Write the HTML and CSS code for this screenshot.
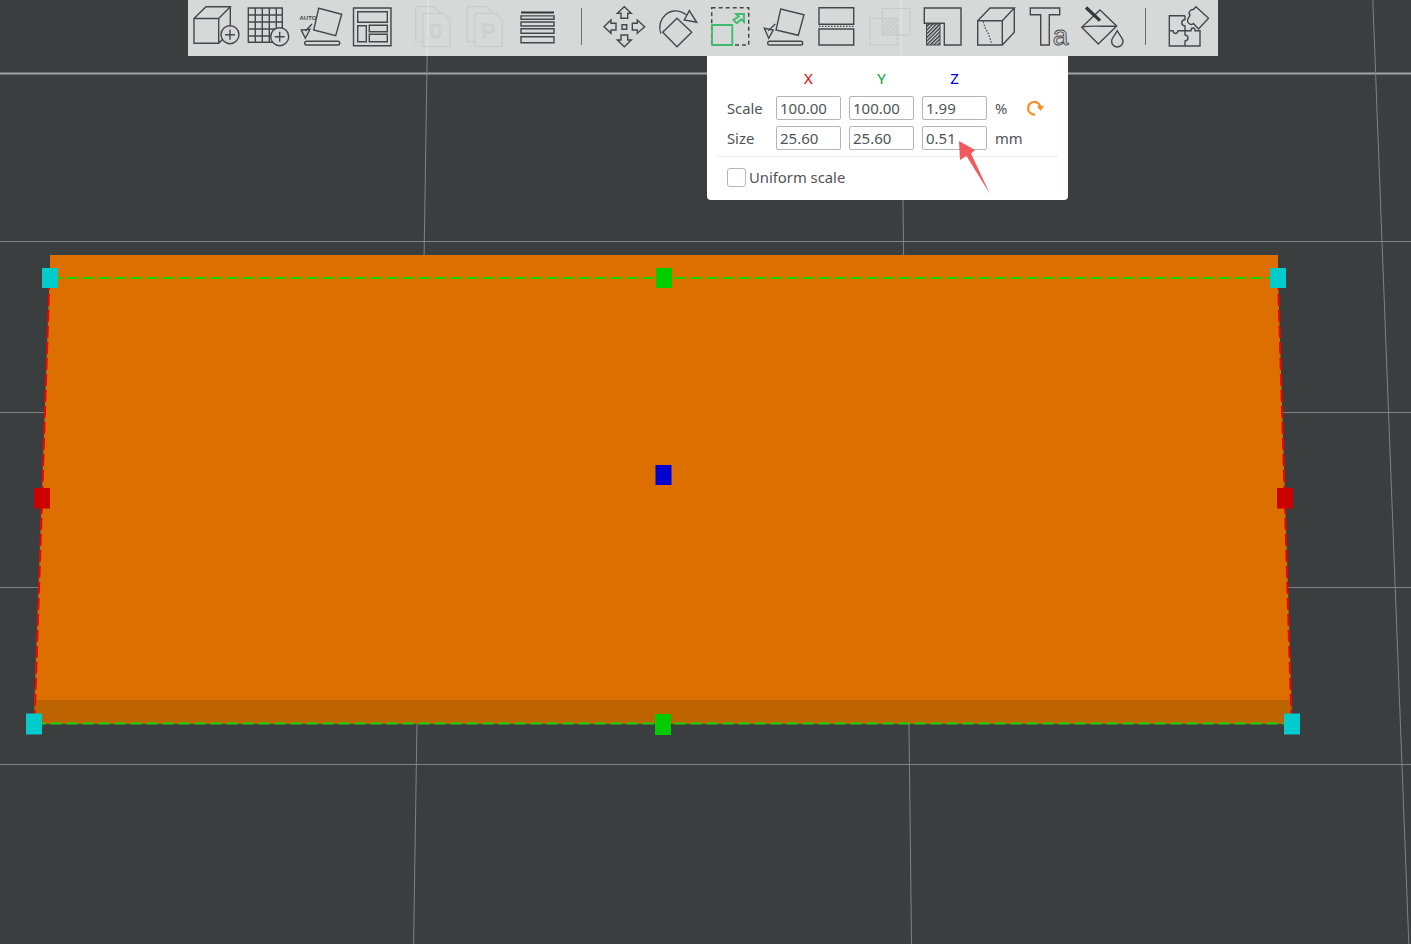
FILE: index.html
```html
<!DOCTYPE html>
<html lang="en">
<head>
<meta charset="utf-8">
<title>Scale tool</title>
<link rel="stylesheet" href="styles.css">
</head>
<body>
<svg class="scene" viewBox="0 0 1411 944" aria-hidden="true">
  <g class="grid-line">
    <path class="strong" d="M0 73.5H1411"/>
    <path d="M0 241.5H1411M0 412.5H1411M0 587.5H1411M0 764.5H1411"/>
    <path d="M428 0L413.6 944M900.7 0L911.5 944M1372.8 0L1408.8 944"/>
  </g>
  <polygon class="body-top" points="50,255 1278,255 1278,278 1291.5,700 1291.5,724 34.5,724 34.5,700 49.5,278 50,278"/>
  <polygon class="body-front" points="34.5,700 1291.5,700 1291.5,724 34.5,724"/>
  <path class="dash-green" d="M50 278H1278M34 723.5H1292"/>
  <path class="dash-red" d="M49.5 278L34.5 723M1278 278L1291.5 723"/>
  <rect class="h-cyan" x="42" y="268" width="16" height="20"/>
  <rect class="h-cyan" x="1270" y="268" width="16" height="20"/>
  <rect class="h-cyan" x="26" y="713.5" width="16" height="21"/>
  <rect class="h-cyan" x="1284" y="713.5" width="16" height="21"/>
  <rect class="h-green" x="656" y="268" width="16" height="20"/>
  <rect class="h-green" x="655" y="714" width="16" height="21"/>
  <rect class="h-red" x="34" y="488" width="16" height="20.5"/>
  <rect class="h-red" x="1277" y="488" width="16" height="20.5"/>
  <rect class="h-blue" x="655.5" y="465" width="16" height="20"/>
</svg>

<div class="toolbar">
  <svg class="tool" viewBox="190 0 53 56">
    <path class="ic" d="M194 18.5H218.7V43.3H194ZM194 18.5L206 6.7H230.3L218.7 18.5M230.3 6.7V26M218.7 43.3L224 38"/>
    <circle class="ic bg" cx="230" cy="34.7" r="9"/>
    <path class="ic" d="M225 34.7H235M230 29.7V39.7"/>
  </svg>
  <svg class="tool" viewBox="243 0 53 56">
    <path class="ic" d="M248.3 8H282.3V42.3H248.3ZM255.3 8V42.3M262.3 8V42.3M269.3 8V42.3M276.3 8V42.3M248.3 15H282.3M248.3 22H282.3M248.3 29H282.3M248.3 36H282.3"/>
    <circle class="ic bg" cx="279.7" cy="36.7" r="9"/>
    <path class="ic" d="M274.7 36.7H284.7M279.7 31.7V41.7"/>
  </svg>
  <svg class="tool" viewBox="296 0 53 56">
    <text class="auto" x="299.5" y="20">AUTO</text>
    <path class="ic" d="M318.7 8.3L341.7 14.3L335.7 35.7L313.7 30ZM301.3 30L310 29.3L305.3 38.3ZM305.5 31L312 24"/>
    <rect class="ic" x="304.7" y="41.3" width="35" height="3.7" rx="1.8"/>
  </svg>
  <svg class="tool" viewBox="349 0 53 56">
    <path class="ic" d="M353.5 8H391V45.7H353.5Z"/>
    <path class="ic" d="M357.7 11.7H387.3V22.3H357.7ZM357.7 25.7H366.3V41.7H357.7ZM369.3 25.3H387.3V31.7H369.3ZM369.3 34.3H387.3V41.7H369.3Z"/>
  </svg>
  <svg class="tool tool-after-gap" viewBox="407 0 53 56">
    <path class="off" d="M422.7 41.7H415.7V6.7H434L441 13.3M422.7 13.3H443.5L450 20V46.7H422.7Z"/>
    <text class="doc-letter" x="430" y="38">0</text>
  </svg>
  <svg class="tool" viewBox="460 0 53 56">
    <path class="off" d="M474.7 41.7H467.3V6.7H486L493 13.3M474.7 13.3H496L502.3 20V46.7H474.7Z"/>
    <text class="doc-letter" x="481.5" y="38">P</text>
  </svg>
  <svg class="tool" viewBox="513 0 53 56">
    <path class="ic thick" d="M521 12.5H554"/>
    <path class="ic" d="M521 15.9H554V19.3H521ZM521 22H554V26H521ZM521 28.7H554V33.3H521ZM521 36.7H554V42.7H521Z"/>
  </svg>
  <span class="sep sep-a"></span>
  <svg class="tool" viewBox="598 0 53 56">
    <path class="ic" d="M622 24.7H626.7V29.3H622Z"/>
    <path class="ic" d="M624.3 6.7L631.3 13.3H627.7V18.3H621V13.3H617.3ZM624.3 46.7L631.3 40H627.7V35H621V40H617.3ZM604 26.7L611 20V23.3H616V30H611V33.3ZM644.7 26.7L637.3 20V23.3H632.3V30H637.3V33.3Z"/>
  </svg>
  <svg class="tool" viewBox="651 0 53 56">
    <path class="ic" d="M677 18.3L691.7 32.3L677 46.7L662.7 32.3Z"/>
    <path class="ic" d="M660.8 33.5C655.5 20 670 3 686.5 15"/>
    <path class="ic" d="M689.3 10.7L696.7 22.3L684.3 20Z"/>
  </svg>
  <svg class="tool" viewBox="704 0 53 56">
    <path class="ic dashed" d="M711.7 7.7H748.7V45H711.7Z"/>
    <path class="ic-green" d="M712 25H732.3V45H712Z"/>
    <path class="ic-green thin" d="M736 14H744V22L741.3 19.3L736.7 23.3L733.5 20L738.7 16.5Z"/>
  </svg>
  <svg class="tool" viewBox="757 0 53 56">
    <path class="ic" d="M780.7 9L804 14.7L798.3 35.3L776 30ZM764.3 28.3L773.3 30L768.7 38.3ZM768.3 30.7L775.3 24"/>
    <rect class="ic" x="767.7" y="41.3" width="35" height="3.7" rx="1.8"/>
  </svg>
  <svg class="tool" viewBox="810 0 53 56">
    <path class="ic" d="M819 7.7H853.7V24.3H819ZM819 29H853.7V45H819Z"/>
    <path class="ic dotted" d="M819 26.3H853.7"/>
  </svg>
  <svg class="tool" viewBox="863 0 53 56">
    <defs>
      <pattern id="hatch-light" width="3" height="3" patternUnits="userSpaceOnUse" patternTransform="rotate(-45)">
        <rect width="3" height="1.2" class="hatch-light"/>
      </pattern>
      <pattern id="hatch-dark" width="2.6" height="2.6" patternUnits="userSpaceOnUse" patternTransform="rotate(-45)">
        <rect width="2.6" height="1.3" class="hatch-dark"/>
      </pattern>
    </defs>
    <rect class="fill-light" x="883" y="18.3" width="14.5" height="16.7"/>
    <path class="off" d="M882.3 8.3H910V35H882.3ZM870 18.3H897.7V45H870Z"/>
  </svg>
  <svg class="tool" viewBox="916 0 53 56">
    <path class="ic" d="M924.3 8H961V45H944.3V23.3H924.3Z"/>
    <rect class="fill-dark" x="926.5" y="24" width="13.5" height="21"/>
  </svg>
  <svg class="tool" viewBox="969 0 53 56">
    <path class="ic" d="M977.7 20.7H1002.3V45H977.7ZM977.7 20.7L990 8H1014.3L1002.3 20.7M1014.3 8V32.3L1002.3 45"/>
    <path class="ic dotted" d="M983.3 21.7L985.5 29L988.3 33.3L991.7 43.3"/>
  </svg>
  <svg class="tool" viewBox="1022 0 53 56">
    <path class="ic" d="M1030.3 8H1059.7V14.7H1049.3V45H1040.7V14.7H1030.3Z"/>
    <text class="letter-a" x="1052.8" y="45">a</text>
  </svg>
  <svg class="tool" viewBox="1075 0 53 56">
    <path class="ic" d="M1100 10L1116.7 26L1098.3 44L1081.7 27.3ZM1082.5 27C1093 25 1106 27 1116 26"/>
    <path class="ic handle" d="M1086 7.5L1100 20.7"/>
    <path class="ic" d="M1117.3 30.7C1114.5 36 1111.6 38 1111.6 41.3A5.7 5.7 0 0 0 1123 41.3C1123 38 1120 36 1117.3 30.7Z"/>
  </svg>
  <span class="sep sep-b"></span>
  <svg class="tool" viewBox="1162 0 53 56">
    <path class="ic" d="M1185 15.7H1169.3V46H1200V30.7H1195C1195 27 1191 27 1191 30.7H1185"/>
    <path class="ic" d="M1185 15.7V19.5C1181 20 1180.5 25.5 1185 26V30.7V35C1189 35.5 1189 40.5 1185 41V46"/>
    <path class="ic" d="M1169.3 30.7H1173C1173.5 34.5 1177.5 34.5 1178 30.7H1185"/>
    <path class="ic" d="M1196 6.7L1208.5 18.3L1198.5 29L1193.5 23.5C1191.5 25.5 1188 24 1187.5 21C1187 18.5 1190 16.5 1190 15C1187.5 12.5 1191 9 1193.5 9.5Z"/>
  </svg>

  <div class="panel">
    <div class="panel-grid">
      <span></span>
      <span class="axis axis-x">X</span>
      <span class="axis axis-y">Y</span>
      <span class="axis axis-z">Z</span>
      <span></span>
      <span></span>

      <span class="label">Scale</span>
      <input class="field" value="100.00">
      <input class="field" value="100.00">
      <input class="field" value="1.99">
      <span class="label">%</span>
      <svg class="reset" viewBox="0 0 20 20">
        <path class="reset-arc" d="M10 16.5A6.3 6.3 0 1 1 15.5 9"/>
        <polygon class="reset-head" points="12,8 19,8 15.5,13"/>
      </svg>

      <span class="label">Size</span>
      <input class="field" value="25.60">
      <input class="field" value="25.60">
      <input class="field" value="0.51">
      <span class="label">mm</span>
      <span></span>
    </div>
    <div class="divider"></div>
    <label class="uniform"><span class="check"></span>Uniform scale</label>
    <svg class="callout" viewBox="0 0 40 60">
      <polygon points="2,1 18,10 14,13.5 33,54 9.5,16 3,20"/>
    </svg>
  </div>
</div>
</body>
</html>
```
FILE: styles.css
```css
* { box-sizing: border-box; }
html, body { margin: 0; height: 100%; }
body {
  position: relative;
  width: 1411px;
  height: 944px;
  overflow: hidden;
  background: #3a3e3f;
  font-family: "Noto Sans", "Open Sans", sans-serif;
}

/* 3D viewport */
.scene { position: absolute; left: 0; top: 0; width: 1411px; height: 944px; }
.grid-line path { fill: none; stroke: #7f8282; stroke-width: 1; }
.grid-line path.strong { stroke: #a2a4a4; stroke-width: 2; }
.body-top { fill: #dc6f00; }
.body-front { fill: #bd6300; }
.dash-green { fill: none; stroke: #16d400; stroke-width: 2; stroke-dasharray: 12 4; }
.dash-red { fill: none; stroke: #f40000; stroke-width: 2; stroke-dasharray: 12 4; }
.h-cyan { fill: #00cccc; }
.h-green { fill: #00cc00; }
.h-red { fill: #cc0000; }
.h-blue { fill: #0000d0; }

/* Toolbar */
.toolbar {
  position: relative;
  display: flex;
  align-items: flex-start;
  width: 1030px;
  height: 56px;
  margin-left: 188px;
  padding-left: 2px;
  background: rgba(255, 255, 255, 0.8);
}
.tool { flex: none; width: 53px; height: 56px; }
.tool-after-gap { margin-left: 5px; }
.sep { flex: none; width: 1px; height: 37px; margin-top: 8px; background: #6b6e6f; }
.sep-a { margin-left: 15px; margin-right: 16px; }
.sep-b { margin-left: 17px; margin-right: 16px; }

.ic { fill: none; stroke: #45484a; stroke-width: 1.4; }
.ic.bg { fill: #d7d7d7; }
.ic.thick { stroke-width: 2; stroke: #333638; }
.ic.dashed { stroke-width: 1.5; stroke-dasharray: 4 3; }
.ic.dotted { stroke-width: 1.2; stroke-dasharray: 1.5 1.5; }
.ic.handle { stroke-width: 3.2; stroke: #333638; }
.ic-green { fill: none; stroke: #3dbb6e; stroke-width: 1.8; }
.ic-green.thin { stroke-width: 1.8; }
.off { fill: none; stroke: #cbcbcb; stroke-width: 1.3; }
.auto { font: bold 6px "Liberation Sans", sans-serif; fill: #45484a; }
.doc-letter { font: 21px "Liberation Sans", sans-serif; fill: none; stroke: #cbcbcb; stroke-width: 0.8; }
.letter-a { font: 28px "Liberation Sans", sans-serif; fill: #d7d7d7; stroke: #45484a; stroke-width: 0.9; }
.hatch-light { fill: #c6c6c6; }
.hatch-dark { fill: #333638; }
.fill-light { fill: url(#hatch-light); }
.fill-dark { fill: url(#hatch-dark); stroke: #45484a; stroke-width: 1; }

/* Scale panel */
.panel {
  position: absolute;
  left: 519px;
  top: 56px;
  width: 361px;
  height: 144px;
  padding: 12px 10px 0;
  background: #fff;
  border-radius: 0 0 4px 4px;
  color: #505458;
  font-size: 14.8px;
}
.panel-grid {
  display: grid;
  grid-template-columns: 41px 65px 65px 65px 24px 20px;
  grid-template-rows: 22px 24px 24px;
  column-gap: 8px;
  row-gap: 6px;
  align-items: center;
  padding-left: 10px;
}
.axis { text-align: center; font-size: 15px; line-height: 18px; margin-top: -3px; }
.axis-x { color: #f00000; }
.axis-y { color: #00a040; }
.axis-z { color: #0000e0; }
.label { white-space: nowrap; }
.field {
  width: 65px;
  height: 24px;
  padding: 0 3px;
  border: 1px solid #b4b4ba;
  border-radius: 2px;
  background: #fff;
  color: #505458;
  font: 15px "Noto Sans", "Open Sans", sans-serif;
  outline: none;
}
.reset { width: 20px; height: 20px; margin-left: -2px; }
.reset-arc { fill: none; stroke: #ff8a24; stroke-width: 2.2; }
.reset-head { fill: #ff8a24; }
.divider { height: 1px; margin-top: 6px; background: #ececec; }
.uniform {
  display: flex;
  align-items: center;
  gap: 3px;
  margin: 11px 0 0 10px;
  line-height: 19px;
}
.check {
  width: 19px;
  height: 19px;
  border: 1px solid #b4b4ba;
  border-radius: 3px;
  background: #fff;
}
.callout { position: absolute; left: 250px; top: 84px; width: 40px; height: 60px; }
.callout polygon { fill: #f05a5a; }
```
